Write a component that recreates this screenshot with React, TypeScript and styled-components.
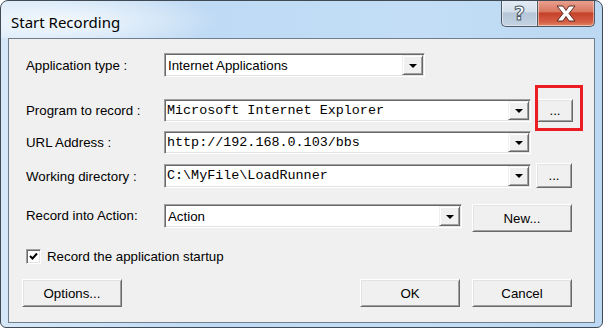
import React from "react";
import styled, { createGlobalStyle } from "styled-components";

const Global = createGlobalStyle`
  html, body { margin: 0; padding: 0; background: #ffffff; }
  body { font-family: "Liberation Sans", Arial, sans-serif; }
`;

const Window = styled.div`
  box-sizing: border-box;
  width: 603px;
  height: 328px;
  border: 1px solid #3f4a55;
  border-radius: 8px 8px 6px 6px;
  background: linear-gradient(90deg, #d6e8f8 0%, #bfdaf4 35%, #c2ddf5 70%, #bcd8f2 100%);
  display: flex;
  flex-direction: column;
  padding: 0 7px 4px 7px;
  overflow: hidden;
`;

const TitleBar = styled.div`
  height: 37px;
  display: flex;
  justify-content: space-between;
  align-items: flex-start;
  background: radial-gradient(ellipse 160px 30px at 60px 20px, rgba(255,255,255,0.75), rgba(255,255,255,0) 100%);
  margin: 0 -7px;
  padding: 0 7px 0 10px;
`;

const Title = styled.div`
  font-family: "Noto Sans", "Open Sans", sans-serif;
  font-size: 15px;
  color: #000;
  line-height: 20px;
  margin-top: 11px;
`;

const Caption = styled.div`
  display: flex;
  margin-top: -1px;
`;

const CapButton = styled.div<{ $kind: "help" | "close" }>`
  box-sizing: border-box;
  height: 27px;
  width: ${(p) => (p.$kind === "help" ? "36px" : "58px")};
  border: 1px solid #4e5964;
  border-top: none;
  ${(p) => (p.$kind === "help" ? "border-right: none; border-radius: 0 0 0 5px;" : "border-radius: 0 0 5px 0;")}
  background: ${(p) =>
    p.$kind === "help"
      ? "linear-gradient(180deg, #e4ecf5 0%, #d3dfec 45%, #b5c6d8 50%, #c3d3e4 100%)"
      : "linear-gradient(180deg, #eaa393 0%, #d9775f 45%, #c5412a 50%, #d65f45 85%, #e08a6c 100%)"};
  box-shadow: inset 0 0 0 1px rgba(255,255,255,0.45);
  display: flex;
  align-items: center;
  justify-content: center;
`;

const HelpGlyph = styled.span`
  font-family: "DejaVu Sans", sans-serif;
  font-weight: bold;
  font-size: 19px;
  color: #ffffff;
  -webkit-text-stroke: 1px #4a5866;
  line-height: 1;
  margin-top: 1px;
`;

const Client = styled.div`
  flex: 1;
  box-sizing: border-box;
  border: 1px solid #6f7f8e;
  background: #f0f0f0;
  display: flex;
  flex-direction: column;
  padding: 14px 0 0 17px;
  font-size: 13.3px;
  color: #000;
`;

const Row = styled.div<{ $mt?: number }>`
  display: flex;
  align-items: center;
  margin-top: ${(p) => p.$mt ?? 0}px;
`;

const Label = styled.div<{ $nudge?: number }>`
  width: 138px;
  flex: none;
  white-space: nowrap;
  margin-top: ${(p) => p.$nudge ?? 0}px;
`;

const Combo = styled.div<{ $w: number; $h?: number }>`
  box-sizing: border-box;
  width: ${(p) => p.$w}px;
  height: ${(p) => p.$h ?? 24}px;
  background: #fff;
  border: 1px solid;
  border-color: #a0a0a0 #ffffff #ffffff #a0a0a0;
  box-shadow: inset 1px 1px 0 #696969, inset -1px -1px 0 #e3e3e3;
  display: flex;
  align-items: center;
  padding: 1px;
  flex: none;
`;

const ComboText = styled.div<{ $mono?: boolean }>`
  flex: 1;
  padding-left: ${(p) => (p.$mono ? "1px" : "2px")};
  font-family: ${(p) => (p.$mono ? '"Liberation Mono", "Courier New", monospace' : '"Liberation Sans", Arial, sans-serif')};
  font-size: ${(p) => (p.$mono ? "13.4px" : "13.3px")};
  white-space: nowrap;
  overflow: hidden;
`;

const DropBtn = styled.div`
  box-sizing: border-box;
  width: 21px;
  align-self: stretch;
  background: #f0f0f0;
  border: 1px solid;
  border-color: #f0f0f0 #696969 #696969 #f0f0f0;
  box-shadow: inset 1px 1px 0 #ffffff, inset -1px -1px 0 #a0a0a0;
  display: flex;
  align-items: center;
  justify-content: center;
`;

const Arrow = styled.div`
  width: 0;
  height: 0;
  border-left: 4px solid transparent;
  border-right: 4px solid transparent;
  border-top: 4px solid #000;
  margin-top: 1px;
`;

const Button = styled.div<{ $w: number; $h: number; $ml?: number }>`
  box-sizing: border-box;
  position: relative;
  flex: none;
  width: ${(p) => p.$w}px;
  height: ${(p) => p.$h}px;
  margin-left: ${(p) => p.$ml ?? 0}px;
  background: #f0f0f0;
  border: 1px solid;
  border-color: #ffffff #696969 #696969 #ffffff;
  box-shadow: inset 1px 1px 0 #e3e3e3, inset -1px -1px 0 #a0a0a0;
  display: flex;
  align-items: center;
  justify-content: center;
  font-size: 13.3px;
`;

const Highlight = styled.div`
  position: absolute;
  left: -3px;
  top: -15px;
  width: 48px;
  height: 46px;
  border: 3px solid #ec1c24;
  box-sizing: border-box;
`;

const TopRow = styled(Row)`
  align-items: flex-start;
`;

const CheckRow = styled.div`
  display: flex;
  align-items: center;
  margin-top: 17px;
`;

const CheckBox = styled.div`
  box-sizing: border-box;
  width: 15px;
  height: 15px;
  background: #fff;
  border: 1px solid;
  border-color: #a0a0a0 #ffffff #ffffff #a0a0a0;
  box-shadow: inset 1px 1px 0 #696969, inset -1px -1px 0 #e3e3e3;
  display: flex;
  align-items: center;
  justify-content: center;
`;

const CheckLabel = styled.div`
  margin-left: 6px;
`;

const ButtonRow = styled.div`
  display: flex;
  margin-top: 15px;
  margin-left: -4px;
`;

const Spacer = styled.div`
  flex: 1;
`;

const ButtonGroup = styled.div`
  display: flex;
  gap: 12px;
  margin-right: 22px;
`;

function ComboBox({ w, h, text, mono }: { w: number; h?: number; text: string; mono?: boolean }) {
  return (
    <Combo $w={w} $h={h}>
      <ComboText $mono={mono}>{text}</ComboText>
      <DropBtn>
        <Arrow />
      </DropBtn>
    </Combo>
  );
}

export default function App() {
  return (
    <>
      <Global />
      <Window>
        <TitleBar>
          <Title>Start Recording</Title>
          <Caption>
            <CapButton $kind="help">
              <HelpGlyph>?</HelpGlyph>
            </CapButton>
            <CapButton $kind="close">
              <svg width="22" height="17" viewBox="0 0 22 17">
                <path
                  d="M2 1 H8 L11 5.5 L14 1 H20 L14 8.5 L20 16 H14 L11 11.5 L8 16 H2 L8 8.5 Z"
                  fill="#ffffff"
                  stroke="#5a2a22"
                  strokeWidth="1"
                  strokeLinejoin="round"
                />
              </svg>
            </CapButton>
          </Caption>
        </TitleBar>
        <Client>
          <Row>
            <Label>Application type :</Label>
            <ComboBox w={261} text="Internet Applications" />
          </Row>
          <Row $mt={22}>
            <Label>Program to record :</Label>
            <ComboBox w={367} h={23} text="Microsoft Internet Explorer" mono />
            <Button $w={36} $h={23} $ml={6}>
              ...
              <Highlight />
            </Button>
          </Row>
          <Row $mt={9}>
            <Label>URL Address :</Label>
            <ComboBox w={367} h={23} text="http://192.168.0.103/bbs" mono />
          </Row>
          <Row $mt={9}>
            <Label $nudge={2}>Working directory :</Label>
            <ComboBox w={367} text="C:\MyFile\LoadRunner" mono />
            <Button $w={36} $h={25} $ml={5}>
              ...
            </Button>
          </Row>
          <TopRow $mt={16}>
            <Label $nudge={4}>Record into Action:</Label>
            <ComboBox w={298} text="Action" />
            <Button $w={100} $h={28} $ml={10}>
              New...
            </Button>
          </TopRow>
          <CheckRow>
            <CheckBox>
              <svg width="9" height="9" viewBox="0 0 9 9">
                <path d="M1 4 L3.5 6.5 L8 1.5" fill="none" stroke="#000" strokeWidth="2" />
              </svg>
            </CheckBox>
            <CheckLabel>Record the application startup</CheckLabel>
          </CheckRow>
          <ButtonRow>
            <Button $w={100} $h={28}>
              Options...
            </Button>
            <Spacer />
            <ButtonGroup>
              <Button $w={100} $h={28}>
                OK
              </Button>
              <Button $w={100} $h={28}>
                Cancel
              </Button>
            </ButtonGroup>
          </ButtonRow>
        </Client>
      </Window>
    </>
  );
}
